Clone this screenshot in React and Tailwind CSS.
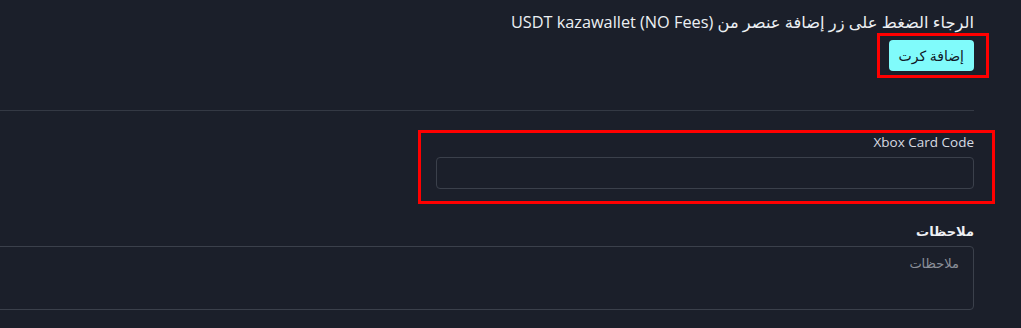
import React from "react";

const font = { fontFamily: '"Open Sans", "DejaVu Sans", sans-serif' };

export default function App() {
  return (
    <div className="w-[1021px] h-[328px] overflow-hidden bg-[#1b1f2a]" style={font}>
      <div dir="rtl" className="w-[1100px] ml-[-126px] pt-[11px]">
        {/* intro */}
        <div>
          <p className="text-[16.3px] leading-[22px] text-[#eceff3]">
            الرجاء الضغط على زر إضافة عنصر من (USDT kazawallet (NO Fees
          </p>
          <div className="mt-[7px] flex">
            <div className="relative">
              <button className="h-[31px] px-[10px] rounded-[4px] bg-[#80fbfb] text-[#111827] text-[14px] leading-none">
                إضافة كرت
              </button>
              <span className="absolute -top-[7px] -bottom-[7px] -right-[15px] -left-[12px] border-[3px] border-[#ff0000] pointer-events-none" />
            </div>
          </div>
        </div>

        <div className="mt-[39px] h-px bg-[#343944]" />

        {/* fields */}
        <div className="grid grid-cols-2 gap-x-[24px] mt-[22px]">
          <div className="relative">
            <label className="block text-[13.5px] leading-[18px] text-[#d7dbe2]">Xbox Card Code</label>
            <input
              type="text"
              className="mt-[6px] w-full h-[32px] rounded-[4px] border border-[#3b404b] bg-transparent outline-none px-3 text-white"
            />
            <span className="absolute -top-[3px] -bottom-[15px] -right-[21px] -left-[18px] border-[3px] border-[#ff0000] pointer-events-none" />
          </div>
          <div />
        </div>

        <div className="mt-[33px]">
          <label className="block text-[13px] leading-[18px] font-bold text-[#eef0f4]">ملاحظات</label>
          <textarea
            placeholder="ملاحظات"
            className="mt-[6px] w-full h-[64px] rounded-[4px] border border-[#3b404b] bg-transparent outline-none px-[14px] py-[7px] text-[13px] text-white placeholder:text-[#8b9099] resize-none"
          />
        </div>
      </div>
    </div>
  );
}
